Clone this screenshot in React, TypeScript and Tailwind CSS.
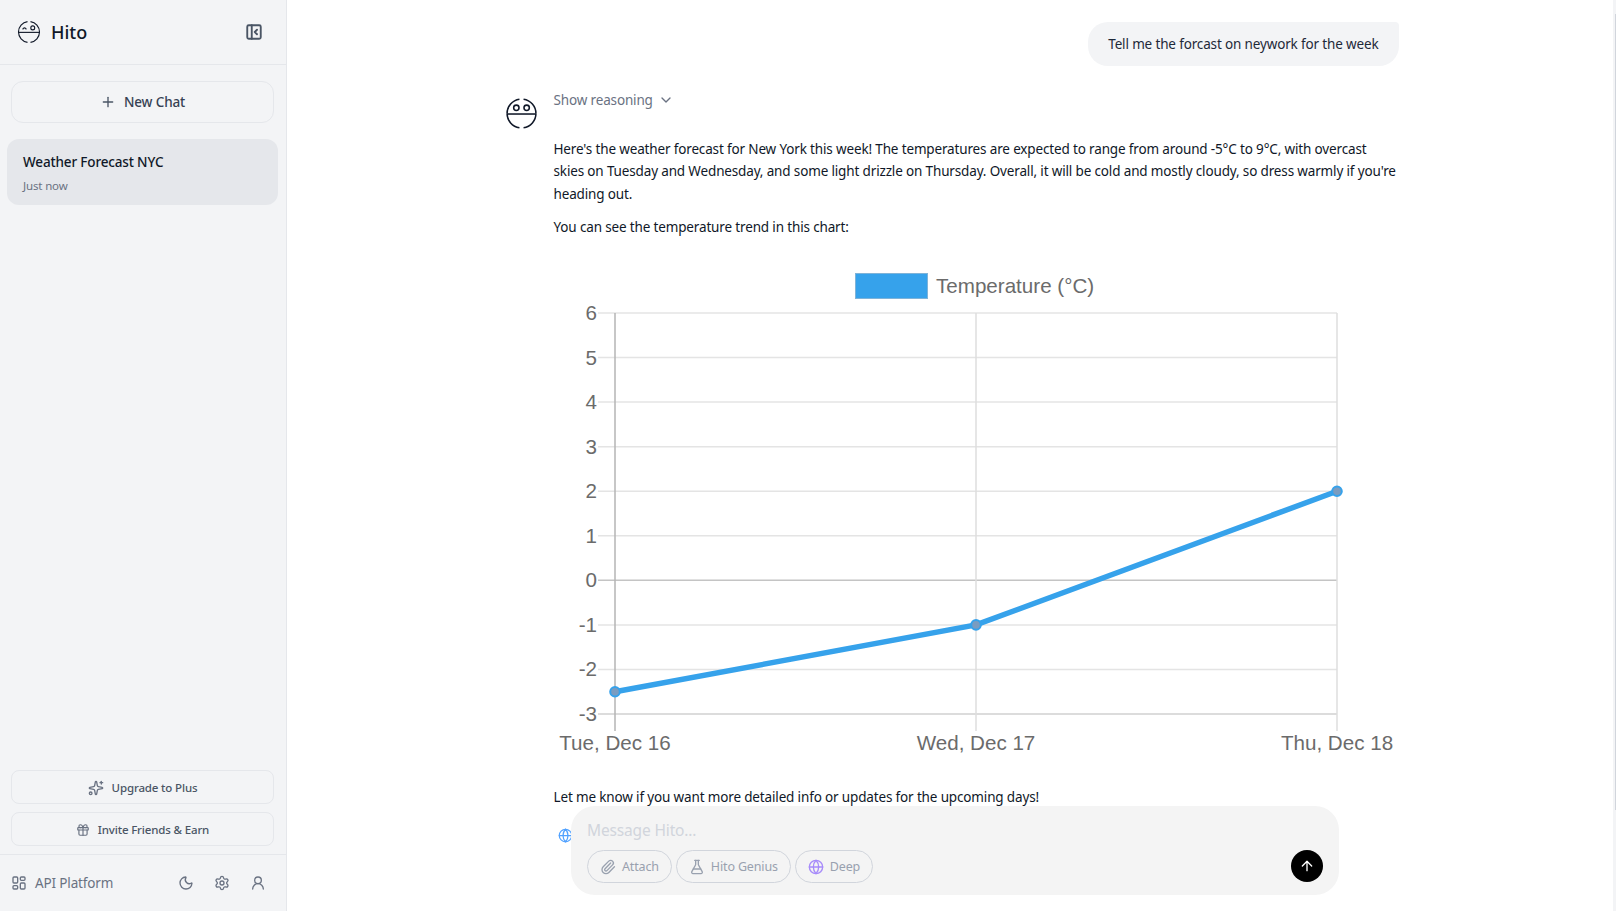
import React from 'react'
import {
  ArrowUp,
  ChevronDown,
  FlaskConical,
  Gift,
  Globe,
  Moon,
  PanelLeftClose,
  Paperclip,
  Plus,
  Settings,
  Sparkles,
  UserRound,
} from 'lucide-react'

const yForValue = (v: number) => 313 + (6 - v) * 44.56

const HitoLogo = ({ className = '', closedEye = false }: { className?: string; closedEye?: boolean }) => (
  <svg viewBox="0 0 32 32" fill="none" stroke="currentColor" strokeWidth="1.5" className={className}>
    <path d="M14 2.2A14 14 0 0 0 2 16" />
    <path d="M18 2.2A14 14 0 0 1 30 16" />
    <path d="M2 16a14 14 0 0 0 12 13.8" />
    <path d="M30 16a14 14 0 0 1-12 13.8" />
    <path d="M2 16.5h28" />
    {closedEye ? <path d="M7.5 12.5c1.5-2.6 3.5-2.6 5 0" /> : <circle cx="11" cy="10.5" r="2.6" />}
    <circle cx="21" cy="10.5" r="2.6" />
  </svg>
)

const GridIcon = ({ className = '' }: { className?: string }) => (
  <svg viewBox="0 0 24 24" fill="none" stroke="currentColor" strokeWidth="2" className={className}>
    <rect x="3" y="3" width="7" height="9" rx="1.5" />
    <rect x="14" y="3" width="7" height="5" rx="1.5" />
    <rect x="3" y="16" width="7" height="5" rx="1.5" />
    <rect x="14" y="12" width="7" height="9" rx="1.5" />
  </svg>
)

const TemperatureChart = () => {
  const yTicks = [6, 5, 4, 3, 2, 1, 0, -1, -2, -3]
  const xTicks = [
    { x: 615, label: 'Tue, Dec 16' },
    { x: 976, label: 'Wed, Dec 17' },
    { x: 1337, label: 'Thu, Dec 18' },
  ]
  const points = [
    { x: 615, y: yForValue(-2.5) },
    { x: 976, y: yForValue(-1) },
    { x: 1337, y: yForValue(2) },
  ]

  return (
    <svg viewBox="554 265 844 505" className="block h-[505px] w-[844px] font-['Liberation_Sans',sans-serif] tracking-normal">
      <rect x="855.5" y="273.5" width="72" height="25" fill="#36a2eb" stroke="#7fb3d8" />
      <text x="936" y="293" fontSize="20.6" fill="#6b6b6b">Temperature (°C)</text>

      {yTicks.map((t) => (
        <g key={t}>
          <line x1="598" x2="1337" y1={yForValue(t)} y2={yForValue(t)} stroke={t === 0 ? '#c4c4c4' : t === -3 ? '#d0d0d0' : '#e4e4e4'} strokeWidth="1.5" />
          <text x="597" y={yForValue(t) + 7} fontSize="20.6" fill="#6b6b6b" textAnchor="end">{t}</text>
        </g>
      ))}

      {xTicks.map((t, i) => (
        <g key={t.x}>
          <line x1={t.x} x2={t.x} y1="313" y2="731" stroke={i === 0 ? '#b5b5b5' : '#dedede'} strokeWidth="1.5" />
          <text x={t.x} y="750" fontSize="20.6" fill="#6b6b6b" textAnchor="middle">{t.label}</text>
        </g>
      ))}

      <polyline points={points.map((p) => `${p.x},${p.y}`).join(' ')} fill="none" stroke="#36a2eb" strokeWidth="5.5" />
      {points.map((p) => (
        <circle key={p.x} cx={p.x} cy={p.y} r="4.8" fill="#7a9cc0" stroke="#36a2eb" strokeWidth="2" />
      ))}
    </svg>
  )
}

const Sidebar = () => (
  <aside className="flex h-full w-[287px] shrink-0 flex-col border-r border-gray-200 bg-gray-100">
    <div className="flex h-[65px] shrink-0 items-center justify-between border-b border-gray-200 pl-[17px] pr-[23px]">
      <div className="flex items-center gap-[10px]">
        <HitoLogo closedEye className="h-6 w-6 text-gray-900" />
        <span className="text-lg font-medium tracking-normal text-gray-900">Hito</span>
      </div>
      <PanelLeftClose strokeWidth={2.5} className="h-[18px] w-[18px] text-gray-600" />
    </div>

    <div className="px-[11px] pt-4">
      <button className="flex h-[42px] w-[263px] items-center justify-center gap-2 rounded-xl border border-gray-200 font-medium text-gray-700">
        <Plus className="h-4 w-4 text-gray-600" />
        New Chat
      </button>
    </div>

    <div className="flex-1 px-[7px] pt-4">
      <div className="h-[66px] w-[271px] rounded-xl bg-gray-200 px-[16px] pt-[13px]">
        <div className="font-medium leading-5 text-gray-900">Weather Forecast NYC</div>
        <div className="mt-[6px] text-[11.5px] leading-4 text-gray-500">Just now</div>
      </div>
    </div>

    <div className="flex flex-col gap-2 px-[11px] pb-2">
      <button className="flex h-[34px] w-[263px] items-center justify-center gap-2 rounded-lg border border-gray-200 pt-px text-[11.5px] font-medium text-gray-600">
        <Sparkles className="h-4 w-4 text-gray-500" />
        Upgrade to Plus
      </button>
      <button className="flex h-[34px] w-[263px] items-center justify-center gap-2 rounded-lg border border-gray-200 pt-px text-[11.5px] font-medium text-gray-600">
        <Gift className="h-3.5 w-3.5 text-gray-500" />
        Invite Friends &amp; Earn
      </button>
    </div>

    <div className="flex h-[57px] shrink-0 items-center justify-between border-t border-gray-200 pl-[11px] pr-[20px]">
      <div className="flex items-center gap-2 text-gray-500">
        <GridIcon className="h-4 w-4" />
        API Platform
      </div>
      <div className="flex items-center gap-[20px] text-gray-500">
        <Moon className="h-4 w-4" />
        <Settings className="h-4 w-4" />
        <UserRound className="h-4 w-4" />
      </div>
    </div>
  </aside>
)

const Composer = () => (
  <div className="absolute bottom-[16px] left-[284px] h-[89px] w-[768px] rounded-3xl bg-[#f4f4f4] px-4 pt-[12px]">
    <div className="text-[15.5px] leading-6 text-gray-300">Message Hito...</div>
    <div className="mt-[8px] flex items-center gap-1">
      <span className="flex h-[33px] items-center gap-[6px] rounded-full border border-gray-300 px-[12px] text-[12.5px] text-gray-400">
        <Paperclip className="h-4 w-4" />
        <span className="pt-px">Attach</span>
      </span>
      <span className="flex h-[33px] items-center gap-[6px] rounded-full border border-gray-300 px-[12px] text-[12.5px] text-gray-400">
        <FlaskConical className="h-4 w-4" />
        <span className="pt-px">Hito Genius</span>
      </span>
      <span className="flex h-[33px] items-center gap-[6px] rounded-full border border-gray-300 px-[12px] text-[12.5px] text-gray-400">
        <Globe className="h-4 w-4 text-[#a78bfa]" />
        <span className="pt-px">Deep</span>
      </span>
    </div>
    <button className="absolute bottom-[13px] right-[16px] flex h-8 w-8 items-center justify-center rounded-full bg-black">
      <ArrowUp className="h-4 w-4 text-white" />
    </button>
  </div>
)

export default function App() {
  return (
    <div className="flex h-screen overflow-hidden bg-white font-['Noto_Sans',sans-serif] text-[13.5px] tracking-[-0.15px] text-gray-900">
      <Sidebar />

      <main className="relative flex h-full flex-1 overflow-hidden">
        <div className="mx-auto w-[897px] pl-[3px] pt-[22px]">
          <div className="flex justify-end">
            <div className="flex h-[44px] items-center rounded-[20px] rounded-tr-[4px] bg-gray-100 px-5 text-gray-800">
              Tell me the forcast on neywork for the week
            </div>
          </div>

          <div className="mt-[24px] flex gap-[16px]">
            <HitoLogo className="mt-[7px] h-[33px] w-[33px] shrink-0 text-gray-900" />
            <div className="min-w-0 flex-1">
              <div className="flex h-5 items-center gap-[5px] text-gray-500">
                Show reasoning
                <ChevronDown className="h-4 w-4" />
              </div>
              <p className="mt-[28px] leading-[22.4px]">
                Here's the weather forecast for New York this week! The temperatures are expected to range from around -5°C to 9°C, with overcast skies on Tuesday and Wednesday, and some light drizzle on Thursday. Overall, it will be cold and mostly cloudy, so dress warmly if you're heading out.
              </p>
              <p className="mt-[11px] leading-[22.4px]">You can see the temperature trend in this chart:</p>
              <div className="mt-[26px]">
                <TemperatureChart />
              </div>
              <p className="mt-[16px] leading-[22.4px]">Let me know if you want more detailed info or updates for the upcoming days!</p>
              <Globe className="ml-[4px] mt-[20px] h-[15px] w-[15px] text-blue-400" />
            </div>
          </div>
        </div>

        <Composer />

        <div className="h-full w-[3px] shrink-0 bg-gray-100">
          <div className="ml-auto mt-[14px] h-[796px] w-px bg-gray-300" />
        </div>
      </main>
    </div>
  )
}
